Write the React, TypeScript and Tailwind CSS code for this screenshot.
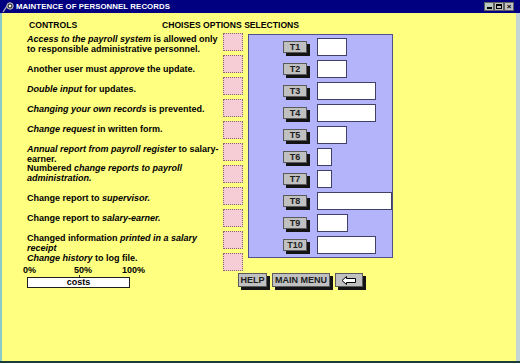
import React from "react";

const I = ({ children }: { children: React.ReactNode }) => <i className="italic">{children}</i>;

const items: { mt: string; content: React.ReactNode }[] = [
  { mt: "mt-0", content: (<><I>Access to the payroll system</I> is allowed only<br />to responsible administrative personnel.</>) },
  { mt: "mt-[10px]", content: (<>Another user must <I>approve</I> the update.</>) },
  { mt: "mt-[10px]", content: (<><I>Double input</I> for updates.</>) },
  { mt: "mt-[10px]", content: (<><I>Changing your own records</I> is prevented.</>) },
  { mt: "mt-[10px]", content: (<><I>Change request</I> in written form.</>) },
  { mt: "mt-[10px]", content: (<><I>Annual report from payroll register</I> to salary-<br />earner.</>) },
  { mt: "mt-[-1px]", content: (<>Numbered <I>change reports to payroll<br />administration.</I></>) },
  { mt: "mt-[10px]", content: (<>Change report to <I>supervisor.</I></>) },
  { mt: "mt-[10px]", content: (<>Change report to <I>salary-earner.</I></>) },
  { mt: "mt-[10px]", content: (<>Changed information <I>printed in a salary<br />receipt</I></>) },
  { mt: "mt-0", content: (<><I>Change history</I> to log file.</>) },
];

const fields = [30, 30, 59, 59, 30, 15, 15, 75, 31, 59];

function TButton({ label }: { label: string }) {
  return (
    <div className="w-[24px] h-[12px] bg-[#c0c0c0] border border-[#5a5a5a] shadow-[3px_3px_0_#141414] flex items-center justify-center text-[9px] leading-none font-bold text-[#202020]">
      {label}
    </div>
  );
}

function BigButton({ w, children }: { w: string; children: React.ReactNode }) {
  return (
    <div className={`${w} h-[14px] bg-[#c0c0c0] border border-[#5a5a5a] shadow-[3px_3px_0_#141414] flex items-center justify-center text-[9px] leading-none font-bold text-[#202020] whitespace-nowrap`}>
      {children}
    </div>
  );
}

export default function App() {
  return (
    <div className="w-[520px] h-[363px] flex flex-col overflow-hidden font-['Liberation_Sans',Arial,sans-serif] text-black">
      {/* Title bar */}
      <div className="h-[13px] bg-[#000080] flex items-center shrink-0">
        <svg width="14" height="12" viewBox="0 0 14 12" className="ml-[1px]">
          <path d="M2 11 L6 5" stroke="#c0c0c0" strokeWidth="1.2" />
          <circle cx="9" cy="5" r="3.2" fill="#404040" stroke="#d0d0d0" strokeWidth="1" />
          <circle cx="9" cy="5" r="1.2" fill="#ffffff" />
        </svg>
        <span className="ml-[1px] text-white font-bold text-[7.8px] leading-none tracking-[0.1px]">
          MAINTENCE OF PERSONNEL RECORDS
        </span>
        <div className="ml-auto mr-[6px] flex">
          <div className="w-[10px] h-[9px] bg-[#b8c8c0] border border-[#606060] flex items-end justify-center pb-[1px]">
            <div className="w-[5px] h-[2px] bg-black" />
          </div>
          <div className="w-[10px] h-[9px] bg-[#c0c0c0] border border-[#606060] flex items-center justify-center">
            <div className="w-[6px] h-[5px] border border-black border-t-2" />
          </div>
          <div className="w-[10px] h-[9px] bg-[#c0c0c0] border border-[#606060] flex items-center justify-center text-[8px] leading-none font-bold">
            ×
          </div>
        </div>
      </div>

      {/* Body */}
      <div className="flex-1 flex">
        <div className="w-[2px] bg-[#8ccaca]" />
        <div className="flex-1 bg-[#ffff80] flex flex-col pl-[25px] pt-[6.5px]">
          {/* Headers */}
          <div className="flex ml-[2px] text-[8.6px] leading-[10px] font-bold">
            <span className="w-[133px]">CONTROLS</span>
            <span>CHOISES OPTIONS SELECTIONS</span>
          </div>

          <div className="flex items-start mt-[3.5px]">
            {/* Left column */}
            <div className="w-[196px] pt-[1px] flex flex-col text-[9px] leading-[10px] font-bold">
              {items.map((it, i) => (
                <p key={i} className={`${it.mt} whitespace-nowrap`}>
                  {it.content}
                </p>
              ))}
              <div className="flex ml-[-4px] mt-[2px] text-[9px] leading-[10px] font-bold">
                <span className="w-[51px]">0%</span>
                <span className="w-[48px]">50%</span>
                <span>100%</span>
              </div>
              <div className="ml-[52px] w-[1px] h-[2px] bg-[#303030]" />
              <div className="w-[103px] h-[11px] bg-white border border-[#202020] flex items-center justify-center text-[9px] leading-none font-bold">
                costs
              </div>
            </div>

            {/* Right part */}
            <div className="flex flex-col">
              <div className="flex items-start">
                <div className="flex flex-col gap-[4px]">
                  {Array.from({ length: 11 }).map((_, i) => (
                    <div key={i} className="w-[20px] h-[18px] bg-[#f6cdd5] border border-dotted border-[#8a6868]" />
                  ))}
                </div>
                <div className="ml-[5px] mt-[1px] w-[145px] h-[224px] bg-[#b4b4fa] border border-[#50508a] pl-[34px] pt-[3px] flex flex-col gap-[4px]">
                  {fields.map((w, i) => (
                    <div key={i} className="h-[18px] flex items-center">
                      <TButton label={`T${i + 1}`} />
                      <div className="ml-[10px] h-[18px] bg-white border border-[#404068]" style={{ width: w }} />
                    </div>
                  ))}
                </div>
              </div>
              <div className="flex ml-[15px] mt-[2px] gap-[5px]">
                <BigButton w="w-[29px]">HELP</BigButton>
                <BigButton w="w-[58px]">MAIN MENU</BigButton>
                <BigButton w="w-[28px]">
                  <svg width="16" height="9" viewBox="0 0 16 9">
                    <path d="M1 4.5 L5.5 0.5 L5.5 2.5 L14.5 2.5 L14.5 6.5 L5.5 6.5 L5.5 8.5 Z" fill="#ffffff" stroke="#000000" strokeWidth="1" strokeLinejoin="miter" />
                  </svg>
                </BigButton>
              </div>
            </div>
          </div>
        </div>
        <div className="w-[4px] bg-[#c4d6d6]" />
      </div>
      <div className="h-[2px] bg-[#1c3c3c] shrink-0" />
    </div>
  );
}
